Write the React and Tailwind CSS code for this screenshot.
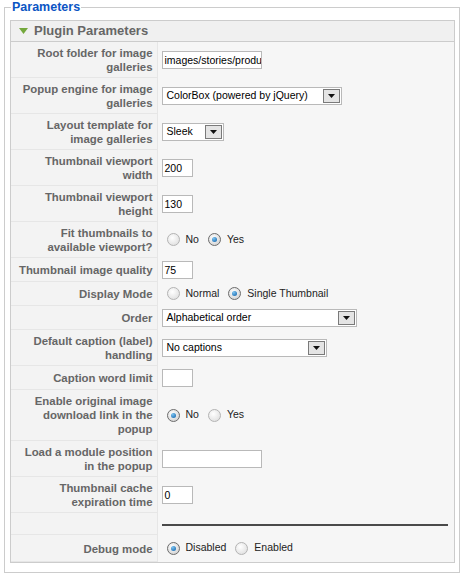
import React from 'react';

const font = { fontFamily: '"Liberation Sans", Arial, sans-serif' };

function Radio({ checked }) {
  return (
    <span
      className={`inline-block w-[13px] h-[13px] rounded-full border shrink-0 relative ${
        checked
          ? 'border-[#6d6d6d] bg-[radial-gradient(circle_at_40%_35%,#ffffff,#c9c9c9)]'
          : 'border-[#b4b4b4] bg-[radial-gradient(circle_at_40%_35%,#ffffff,#d9d9d9)]'
      }`}
    >
      {checked && (
        <span className="absolute left-[3px] top-[3px] w-[5px] h-[5px] rounded-full bg-[radial-gradient(circle_at_35%_30%,#7cc3f0,#0b5ea8)]" />
      )}
    </span>
  );
}

function RadioGroup({ options, selected }) {
  return (
    <div className="flex items-center pl-[5px]">
      {options.map((opt, i) => (
        <label key={opt} className={`flex items-center gap-[6px] ${i > 0 ? 'ml-[9px]' : ''}`}>
          <Radio checked={i === selected} />
          <span className="text-[10.5px] text-[#222]">{opt}</span>
        </label>
      ))}
    </div>
  );
}

function TextInput({ value = '', w }) {
  return (
    <div
      className={`h-[18px] ${w} border border-[#b9b9b9] bg-white text-[10.5px] leading-[16px] pl-[2px] text-black overflow-hidden whitespace-nowrap`}
    >
      {value}
    </div>
  );
}

function Select({ value, w }) {
  return (
    <div className={`h-[18px] ${w} border border-[#b9b9b9] bg-white flex items-center justify-between`}>
      <span className="text-[10.5px] pl-[4px] text-black whitespace-nowrap">{value}</span>
      <span className="w-[17px] h-[14px] mr-[1px] border border-[#7a7a7a] bg-[#e4e4e4] flex items-center justify-center">
        <svg width="7" height="4" viewBox="0 0 7 4">
          <polygon points="0,0 7,0 3.5,4" fill="#111" />
        </svg>
      </span>
    </div>
  );
}

const rows = [
  { label: ['Root folder for image', 'galleries'], value: <TextInput value="images/stories/produ" w="w-[100px]" /> },
  { label: ['Popup engine for image', 'galleries'], value: <Select value="ColorBox (powered by jQuery)" w="w-[180px]" /> },
  { label: ['Layout template for', 'image galleries'], value: <Select value="Sleek" w="w-[62px]" /> },
  { label: ['Thumbnail viewport', 'width'], value: <TextInput value="200" w="w-[31px]" /> },
  { label: ['Thumbnail viewport', 'height'], value: <TextInput value="130" w="w-[31px]" /> },
  { label: ['Fit thumbnails to', 'available viewport?'], value: <RadioGroup options={['No', 'Yes']} selected={1} /> },
  { label: ['Thumbnail image quality'], value: <TextInput value="75" w="w-[31px]" /> },
  { label: ['Display Mode'], value: <RadioGroup options={['Normal', 'Single Thumbnail']} selected={1} />, pad: 'pt-[5px] pb-[4px]' },
  { label: ['Order'], value: <Select value="Alphabetical order" w="w-[195px]" /> },
  { label: ['Default caption (label)', 'handling'], value: <Select value="No captions" w="w-[165px]" /> },
  { label: ['Caption word limit'], value: <TextInput w="w-[31px]" />, pad: 'pt-[5px] pb-[4px]' },
  { label: ['Enable original image', 'download link in the', 'popup'], value: <RadioGroup options={['No', 'Yes']} selected={0} />, pad: 'pt-[4px] pb-[4px]' },
  { label: ['Load a module position', 'in the popup'], value: <TextInput w="w-[100px]" /> },
  { label: ['Thumbnail cache', 'expiration time'], value: <TextInput value="0" w="w-[31px]" /> },
  { label: [], spacer: true },
  { label: ['Debug mode'], value: <RadioGroup options={['Disabled', 'Enabled']} selected={0} />, pad: 'pt-[7px] pb-[5px]' },
];

export default function App() {
  return (
    <div className="bg-white w-[466px] h-[579px]" style={font}>
      <fieldset className="border border-[#cccccc] ml-[4px] mr-[6px] pl-[5px] pr-[4px] pt-[6px] pb-[9px]">
        <legend className="ml-[1px] px-[1px] text-[12.5px] leading-[14px] font-bold text-[#0b55c4]">Parameters</legend>

        <div className="border border-[#cccccc] bg-[#f6f6f6]">
          <div className="h-[21px] bg-[#f0f0f0] border-b border-[#cccccc] flex items-center pl-[8px] gap-[6px]">
            <svg width="9" height="6" viewBox="0 0 9 6">
              <polygon points="0,0 9,0 4.5,6" fill="#74a83c" />
            </svg>
            <span className="text-[13px] font-bold text-[#666666]">Plugin Parameters</span>
          </div>

          <table className="w-full border-collapse">
            <tbody>
              {rows.map((row, i) => (
                <tr key={i}>
                  <td
                    className={`w-[146px] align-middle bg-[#f3f3f3] border-r border-b border-[#e6e6e6] text-right pr-[4px] text-[11.4px] leading-[14px] font-bold text-[#666666] ${
                      row.spacer ? 'h-[22px]' : row.pad || 'pt-[4px] pb-[3px]'
                    }`}
                  >
                    {row.label.map((l, j) => (
                      <div key={j} className="whitespace-nowrap">{l}</div>
                    ))}
                  </td>
                  <td className="align-middle pl-[4px] py-[3px] pr-[6px]">
                    {row.spacer ? <div className="h-[2px] bg-[#4a4a4a] mt-[2px]" /> : row.value}
                  </td>
                </tr>
              ))}
            </tbody>
          </table>
        </div>
      </fieldset>
    </div>
  );
}
